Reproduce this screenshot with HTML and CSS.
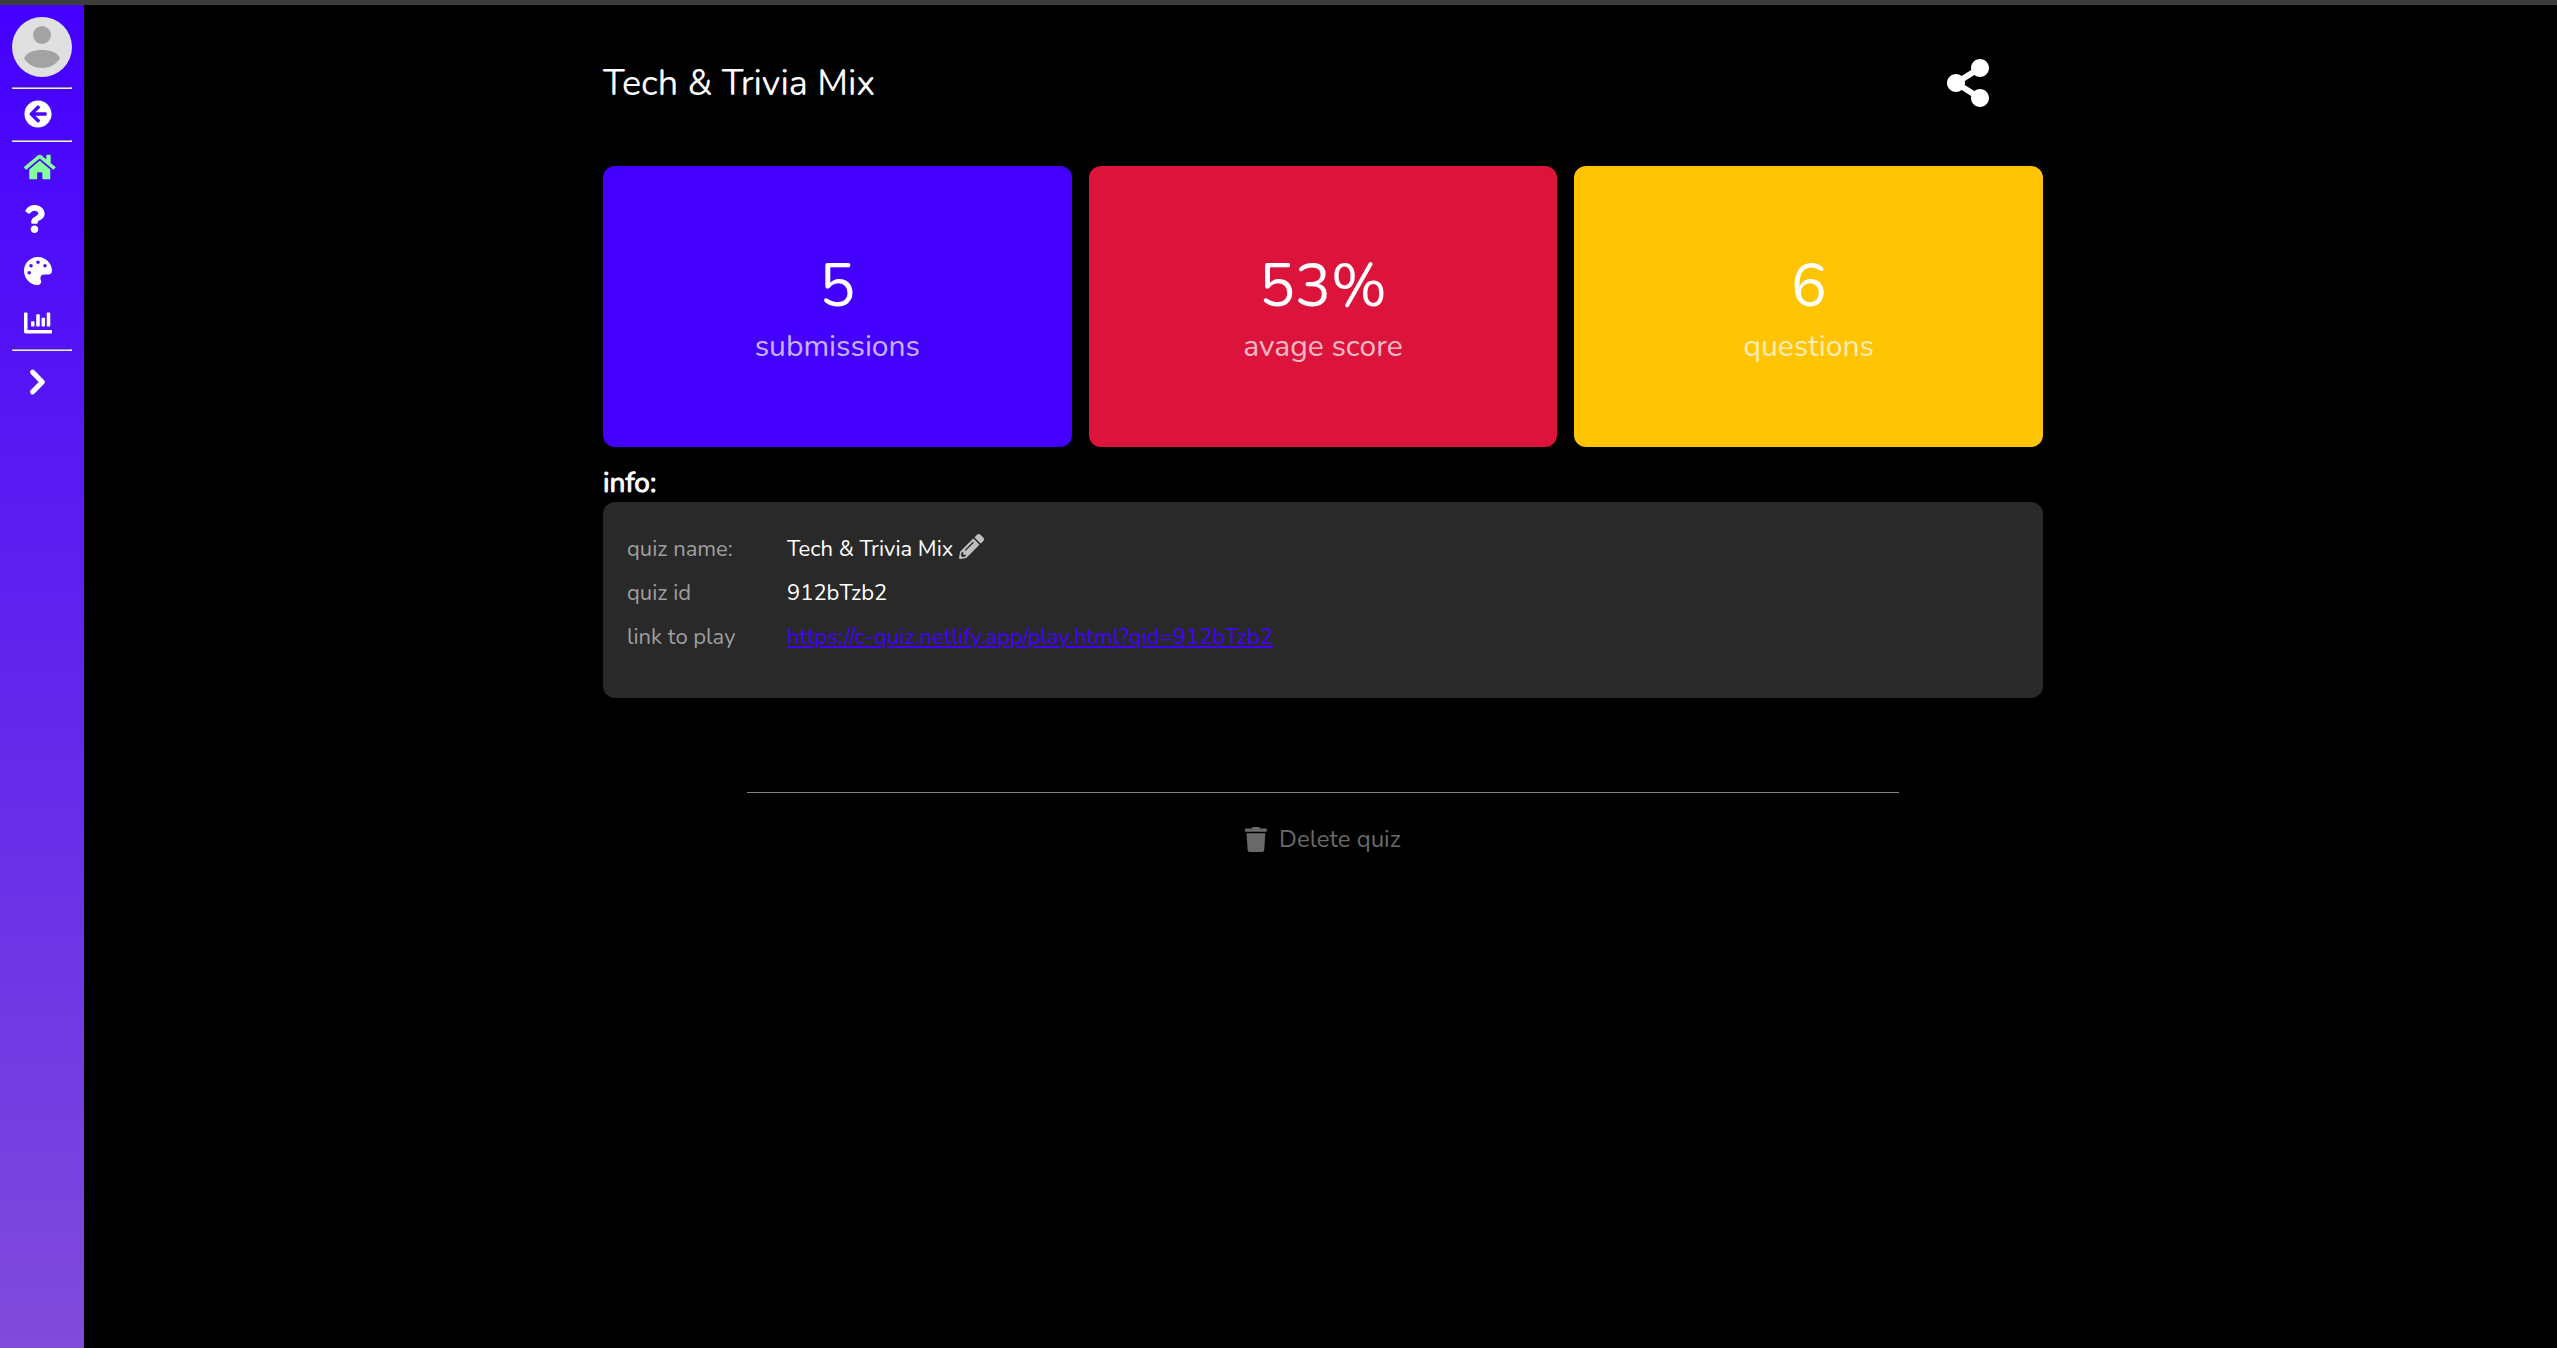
FILE: index.html
```
<!DOCTYPE html>
<html lang="en">
<head>
  <meta charset="UTF-8">
  <meta name="viewport" content="width=device-width, initial-scale=1.0">
  <title>Tech &amp; Trivia Mix</title>
  <link rel="stylesheet" href="styles.css">
</head>
<body>
  <div class="page">
    <nav class="sidebar">
      <a href="#" class="avatar" aria-label="profile">
        <svg viewBox="0 0 60 60">
          <circle cx="30" cy="30" r="30" fill="#e0e0e0"/>
          <circle cx="30" cy="18" r="9" fill="#a3a3a3"/>
          <path fill="#a3a3a3" d="M12 41c3-6 10-8 18-8s15 2 18 8c-3 6-10 10-18 10s-15-4-18-10z"/>
        </svg>
      </a>
      <hr>
      <a href="#" class="navItem" aria-label="back">
        <svg class="icon" viewBox="0 0 512 512"><path d="M256 504C119 504 8 393 8 256S119 8 256 8s248 111 248 248-111 248-248 248zm28.9-143.6L209.4 288H392c13.3 0 24-10.7 24-24v-16c0-13.3-10.7-24-24-24H209.4l75.5-72.4c9.7-9.3 9.9-24.8.4-34.3l-11-10.9c-9.4-9.4-24.6-9.4-33.9 0L107.7 239c-9.4 9.4-9.4 24.6 0 33.9l132.7 132.7c9.4 9.4 24.6 9.4 33.9 0l11-10.9c9.5-9.5 9.3-25-.4-34.3z"/></svg>
      </a>
      <hr>
      <a href="#" class="navItem active" aria-label="home">
        <svg class="icon" viewBox="0 0 576 512"><path d="M280.37 148.26L96 300.11V464a16 16 0 0 0 16 16l112.06-.29a16 16 0 0 0 15.92-16V368a16 16 0 0 1 16-16h64a16 16 0 0 1 16 16v95.64a16 16 0 0 0 16 16.05L464 480a16 16 0 0 0 16-16V300L295.67 148.26a12.19 12.19 0 0 0-15.3 0zM571.6 251.47L488 182.56V44.05a12 12 0 0 0-12-12h-56a12 12 0 0 0-12 12v72.61L318.47 43a48 48 0 0 0-61 0L4.34 251.47a12 12 0 0 0-1.6 16.9l25.5 31A12 12 0 0 0 45.15 301l235.22-193.74a12.19 12.19 0 0 1 15.3 0L530.9 301a12 12 0 0 0 16.9-1.6l25.5-31a12 12 0 0 0-1.7-16.93z"/></svg>
      </a>
      <a href="#" class="navItem" aria-label="questions">
        <svg class="icon" viewBox="0 0 384 512"><path d="M202.021 0C122.202 0 70.503 32.703 29.914 91.026c-7.363 10.58-5.093 25.086 5.178 32.874l43.138 32.709c10.373 7.865 25.132 6.026 33.253-4.148 25.049-31.381 43.63-49.449 82.757-49.449 30.764 0 68.816 19.799 68.816 49.631 0 22.552-18.617 34.134-48.993 51.164-35.423 19.86-82.299 44.576-82.299 106.405V320c0 13.255 10.745 24 24 24h72.471c13.255 0 24-10.745 24-24v-5.773c0-42.86 125.268-44.645 125.268-160.627C377.504 66.256 286.902 0 202.021 0zM192 373.459c-38.196 0-69.271 31.075-69.271 69.271 0 38.195 31.075 69.27 69.271 69.27s69.271-31.075 69.271-69.271-31.075-69.27-69.271-69.27z"/></svg>
      </a>
      <a href="#" class="navItem" aria-label="theme">
        <svg class="icon" viewBox="0 0 512 512"><path d="M204.3 5C104.9 24.4 24.8 104.3 5.2 203.4c-37 187 131.7 326.4 258.8 306.7 41.2-6.4 61.4-54.6 42.5-91.7-23.1-45.4 9.9-98.4 60.9-98.4h79.7c35.8 0 64.8-29.6 64.9-65.3C511.5 97.1 368.1-26.9 204.3 5zM96 320c-17.7 0-32-14.3-32-32s14.3-32 32-32 32 14.3 32 32-14.3 32-32 32zm32-128c-17.7 0-32-14.3-32-32s14.3-32 32-32 32 14.3 32 32-14.3 32-32 32zm128-64c-17.7 0-32-14.3-32-32s14.3-32 32-32 32 14.3 32 32-14.3 32-32 32zm128 64c-17.7 0-32-14.3-32-32s14.3-32 32-32 32 14.3 32 32-14.3 32-32 32z"/></svg>
      </a>
      <a href="#" class="navItem" aria-label="results">
        <svg class="icon" viewBox="0 0 512 512"><path d="M332.8 320h38.4c6.4 0 12.8-6.4 12.8-12.8V172.8c0-6.4-6.4-12.8-12.8-12.8h-38.4c-6.4 0-12.8 6.4-12.8 12.8v134.4c0 6.4 6.4 12.8 12.8 12.8zm96 0h38.4c6.4 0 12.8-6.4 12.8-12.8V76.8c0-6.4-6.4-12.8-12.8-12.8h-38.4c-6.4 0-12.8 6.4-12.8 12.8v230.4c0 6.4 6.4 12.8 12.8 12.8zm-288 0h38.4c6.4 0 12.8-6.4 12.8-12.8v-70.4c0-6.4-6.4-12.8-12.8-12.8h-38.4c-6.4 0-12.8 6.4-12.8 12.8v70.4c0 6.4 6.4 12.8 12.8 12.8zm96 0h38.4c6.4 0 12.8-6.4 12.8-12.8V108.8c0-6.4-6.4-12.8-12.8-12.8h-38.4c-6.4 0-12.8 6.4-12.8 12.8v198.4c0 6.4 6.4 12.8 12.8 12.8zM496 384H64V80c0-8.84-7.16-16-16-16H16C7.16 64 0 71.16 0 80v336c0 17.67 14.33 32 32 32h464c8.84 0 16-7.16 16-16v-32c0-8.84-7.16-16-16-16z"/></svg>
      </a>
      <hr>
      <button class="navItem expand" aria-label="open menu">
        <svg class="icon" viewBox="0 0 28 28"><path d="M8.7 4.2L18.3 14L8.7 23.8" fill="none" stroke="currentColor" stroke-width="5.2" stroke-linecap="round" stroke-linejoin="round"/></svg>
      </button>
    </nav>

    <main>
      <div class="content">
        <header class="top">
          <h1>Tech &amp; Trivia Mix</h1>
          <button class="share" aria-label="share">
            <svg class="icon" viewBox="0 0 448 512"><path d="M352 320c-22.608 0-43.387 7.819-59.79 20.895l-102.486-64.054a96.551 96.551 0 0 0 0-41.683l102.486-64.054C308.613 184.181 329.392 192 352 192c53.019 0 96-42.981 96-96S405.019 0 352 0s-96 42.981-96 96c0 7.158.79 14.13 2.276 20.841L155.79 180.895C139.387 167.819 118.608 160 96 160c-53.019 0-96 42.981-96 96s42.981 96 96 96c22.608 0 43.387-7.819 59.79-20.895l102.486 64.054A96.301 96.301 0 0 0 256 416c0 53.019 42.981 96 96 96s96-42.981 96-96-42.981-96-96-96z"/></svg>
          </button>
        </header>

        <div class="cards">
          <div class="card blue">
            <span class="number">5</span>
            <span class="label">submissions</span>
          </div>
          <div class="card red">
            <span class="number">53%</span>
            <span class="label">avage score</span>
          </div>
          <div class="card yellow">
            <span class="number">6</span>
            <span class="label">questions</span>
          </div>
        </div>

        <h2>info:</h2>
        <div class="info">
          <table>
            <tr>
              <th scope="row">quiz name:</th>
              <td>Tech &amp; Trivia Mix
                <button class="edit" aria-label="edit name">
                  <svg class="icon" viewBox="0 0 512 512"><path d="M497.9 142.1l-46.1 46.1c-4.7 4.7-12.3 4.7-17 0l-111-111c-4.7-4.7-4.7-12.3 0-17l46.1-46.1c18.7-18.7 49.1-18.7 67.9 0l60.1 60.1c18.8 18.7 18.8 49.1 0 67.9zM284.2 99.8L21.6 362.4.4 483.9c-2.9 16.4 11.4 30.6 27.8 27.8l121.5-21.3 262.6-262.6c4.7-4.7 4.7-12.3 0-17l-111-111c-4.8-4.7-12.4-4.7-17.1 0zM124.1 339.9c-5.5-5.5-5.5-14.3 0-19.8l154-154c5.5-5.5 14.3-5.5 19.8 0s5.5 14.3 0 19.8l-154 154c-5.5 5.5-14.3 5.5-19.8 0zM88 424h48v36.3l-64.5 11.3-31.1-31.1L51.7 376H88v48z"/></svg>
                </button>
              </td>
            </tr>
            <tr>
              <th scope="row">quiz id</th>
              <td>912bTzb2</td>
            </tr>
            <tr>
              <th scope="row">link to play</th>
              <td><a href="#">https://c-quiz.netlify.app/play.html?qid=912bTzb2</a></td>
            </tr>
          </table>
        </div>

        <hr class="divider">
        <button class="delete">
          <svg class="icon" viewBox="0 0 448 512"><path d="M432 32H312l-9.4-18.7A24 24 0 0 0 281.1 0H166.8a23.72 23.72 0 0 0-21.4 13.3L136 32H16A16 16 0 0 0 0 48v32a16 16 0 0 0 16 16h416a16 16 0 0 0 16-16V48a16 16 0 0 0-16-16zM53.2 467a48 48 0 0 0 47.9 45h245.8a48 48 0 0 0 47.9-45L416 128H32z"/></svg>
          Delete quiz
        </button>
      </div>
    </main>
  </div>
</body>
</html>
```
FILE: styles.css
```
* {
    box-sizing: border-box;
}

body {
    margin: 0;
    background-color: black;
    color: white;
    font-family: Nunito, Lato, sans-serif;
    font-size: 22px;
}

button {
    padding: 0;
    border: none;
    background: none;
    color: inherit;
    font: inherit;
    cursor: pointer;
}

.icon {
    display: block;
    height: 28px;
    fill: currentColor;
}

.page {
    display: flex;
    min-height: 100vh;
    border-top: 5px solid #3c3c3c;
}

/* sidebar */
.sidebar {
    display: flex;
    flex-direction: column;
    width: 84px;
    padding: 12px;
    background: linear-gradient(#4400ff, #804bdb);
}

.avatar {
    height: 60px;
    margin-bottom: 10px;
}

.sidebar hr {
    width: 100%;
    margin: 0 0 -1px;
    border: 1px solid;
    border-color: #9a9a9a #eeeeee #eeeeee #9a9a9a;
}

.navItem {
    display: flex;
    align-items: center;
    height: 52px;
    padding-left: 12px;
    color: white;
}

.active {
    color: #85ff9b;
}

.expand {
    height: 64px;
}

/* page content */
main {
    flex: 1;
    padding-left: 5px;
}

.content {
    display: flex;
    flex-direction: column;
    max-width: 1440px;
    margin: 0 auto;
}

.top {
    display: flex;
    justify-content: space-between;
    align-items: center;
    height: 161px;
    padding: 0 54px 5px 0;
}

h1 {
    margin: 0;
    font-size: 36px;
    font-weight: normal;
}

.share .icon {
    height: 48px;
}

.cards {
    display: flex;
    gap: 17px;
}

.card {
    flex: 1;
    display: flex;
    flex-direction: column;
    align-items: center;
    justify-content: center;
    height: 281px;
    border-radius: 12px;
}

.blue {
    background-color: #4400ff;
}

.red {
    background-color: #dc143c;
}

.yellow {
    background-color: #ffc404;
}

.number {
    font-size: 60px;
    line-height: 80px;
}

.label {
    font-size: 30px;
    line-height: 42px;
    opacity: 0.7;
}

h2 {
    margin: 17px 0 0;
    font-size: 28px;
    font-weight: normal;
    line-height: 38px;
    -webkit-text-stroke: 1px white;
}

.info {
    height: 196px;
    padding: 25px 24px;
    border-radius: 12px;
    background-color: #292929;
}

table {
    border-collapse: collapse;
}

tr {
    height: 44px;
}

th {
    width: 160px;
    padding: 0;
    color: #9f9f9f;
    font-weight: normal;
    text-align: left;
}

td {
    padding: 0;
}

td a {
    color: #4400ff;
}

.edit {
    color: #bfbfbf;
    vertical-align: -3px;
}

.edit .icon {
    height: 25px;
}

.divider {
    width: 80%;
    margin: 94px auto 0;
    border: none;
    border-top: 1px solid #808080;
}

.delete {
    display: flex;
    align-items: center;
    gap: 12px;
    margin: 30px auto;
    color: #696969;
    font-size: 24px;
    line-height: 32px;
}

.delete .icon {
    height: 25px;
}
```
